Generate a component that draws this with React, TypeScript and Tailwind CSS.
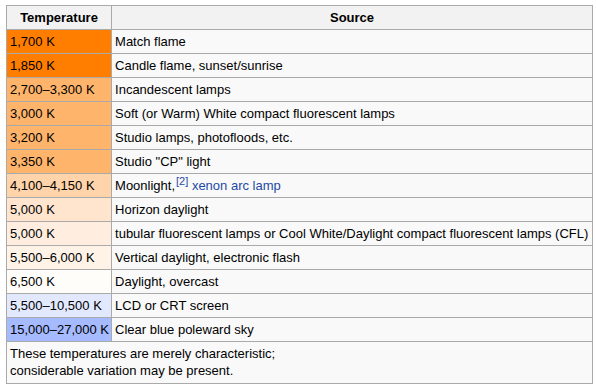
const rows: { temp: string; color: string; source: React.ReactNode }[] = [
  { temp: "1,700 K", color: "bg-[#ff7e00]", source: "Match flame" },
  { temp: "1,850 K", color: "bg-[#ff7e00]", source: "Candle flame, sunset/sunrise" },
  { temp: "2,700–3,300 K", color: "bg-[#ffb46c]", source: "Incandescent lamps" },
  { temp: "3,000 K", color: "bg-[#ffb46c]", source: "Soft (or Warm) White compact fluorescent lamps" },
  { temp: "3,200 K", color: "bg-[#ffb46c]", source: "Studio lamps, photofloods, etc." },
  { temp: "3,350 K", color: "bg-[#ffb46c]", source: 'Studio "CP" light' },
  {
    temp: "4,100–4,150 K",
    color: "bg-[#ffd4aa]",
    source: (
      <>
        Moonlight,
        <sup className="text-[11px] text-[#1f4aa6] ml-[1px]">[2]</sup>{" "}
        <span className="text-[#1f4aa6]">xenon arc lamp</span>
      </>
    ),
  },
  { temp: "5,000 K", color: "bg-[#ffe4ce]", source: "Horizon daylight" },
  {
    temp: "5,000 K",
    color: "bg-[#ffeedf]",
    source: "tubular fluorescent lamps or Cool White/Daylight compact fluorescent lamps (CFL)",
  },
  { temp: "5,500–6,000 K", color: "bg-[#fff3e8]", source: "Vertical daylight, electronic flash" },
  { temp: "6,500 K", color: "bg-[#fffdfa]", source: "Daylight, overcast" },
  { temp: "5,500–10,500 K", color: "bg-[#e2e9ff]", source: "LCD or CRT screen" },
  { temp: "15,000–27,000 K", color: "bg-[#a5baff]", source: "Clear blue poleward sky" },
];

export default function App() {
  return (
    <div className="bg-white w-[597px] h-[391px] pl-[6px] pt-[5px] font-['Liberation_Sans',Arial,sans-serif] text-[13px] text-black">
      <table className="w-[587px] border-collapse border border-[#aaaaaa] bg-[#f9f9f9]">
        <thead>
          <tr className="bg-[#f2f2f2]">
            <th className="w-[104px] border border-[#aaaaaa] px-[3px] py-[3px] leading-[17px] font-bold text-center">
              Temperature
            </th>
            <th className="border border-[#aaaaaa] px-[3px] py-[3px] leading-[17px] font-bold text-center">
              Source
            </th>
          </tr>
        </thead>
        <tbody>
          {rows.map((r, i) => (
            <tr key={i}>
              <td className={`border border-[#aaaaaa] pl-[3px] pr-[2px] py-[3px] leading-[17px] whitespace-nowrap ${r.color}`}>
                {r.temp}
              </td>
              <td className="border border-[#aaaaaa] pl-[3px] pr-[2px] py-[3px] leading-[17px] whitespace-nowrap">
                {r.source}
              </td>
            </tr>
          ))}
          <tr>
            <td colSpan={2} className="border border-[#aaaaaa] px-[3px] pt-[3px] pb-[4px] leading-[17px]">
              These temperatures are merely characteristic;
              <br />
              considerable variation may be present.
            </td>
          </tr>
        </tbody>
      </table>
    </div>
  );
}
